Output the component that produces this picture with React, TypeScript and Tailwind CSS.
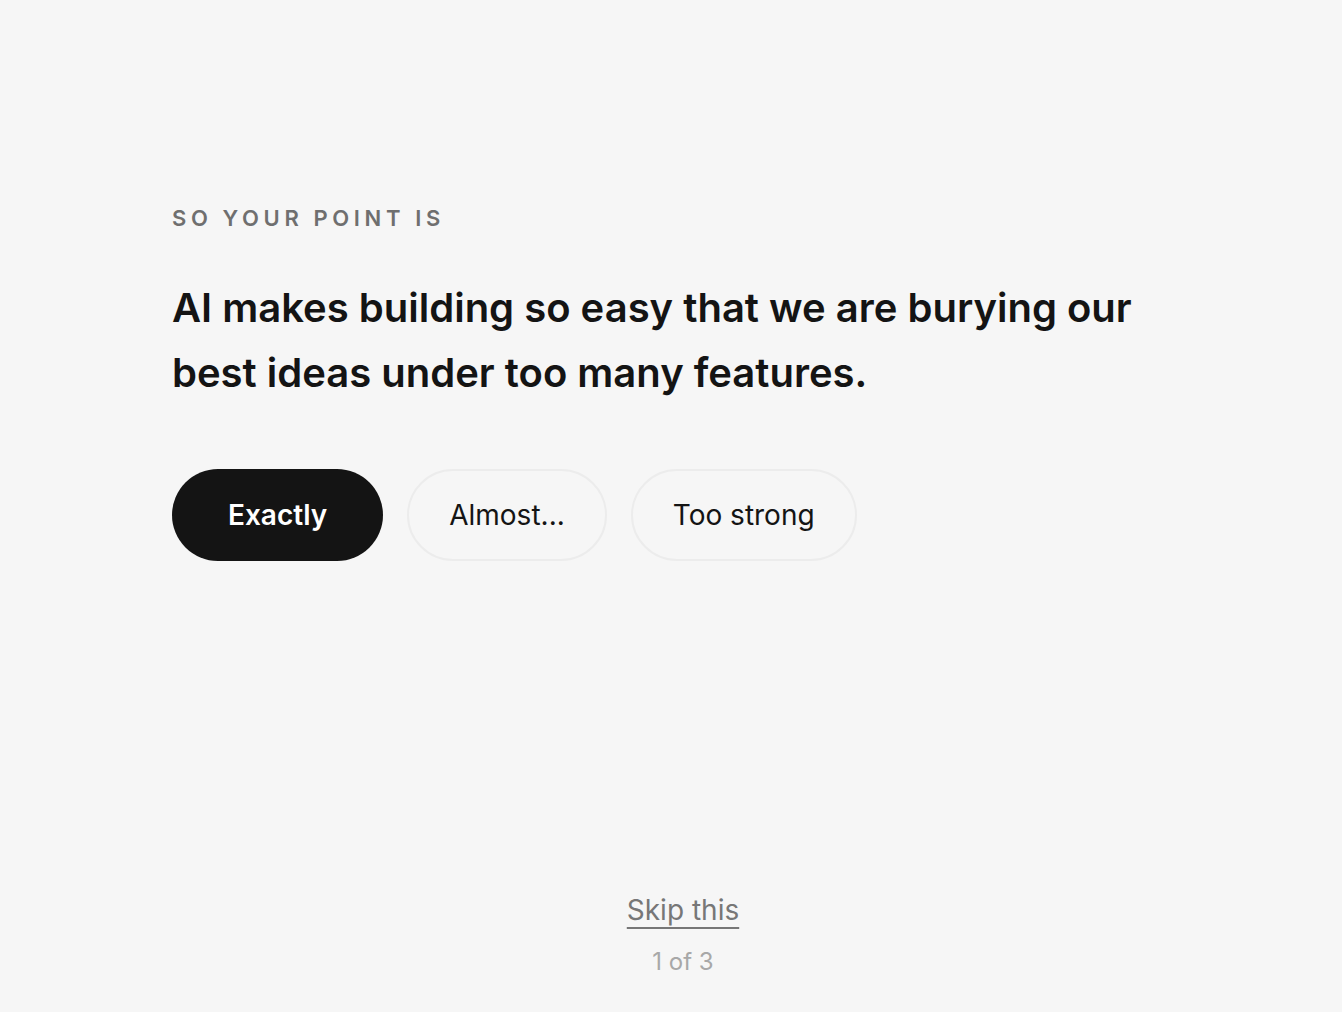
import React from 'react';

export default function App() {
  return (
    <div
      className="min-h-screen bg-[#f6f6f6] flex flex-col pl-[172px] pr-[148px]"
      style={{ fontFamily: 'Inter, "Noto Sans", sans-serif' }}
    >
      <main className="flex-1 pt-[203px]">
        <p className="text-[22px] font-semibold tracking-[0.21em] text-[#6f6f6f] leading-[30px]">
          SO YOUR POINT IS
        </p>
        <h1 className="mt-[42px] text-[40px] font-semibold leading-[65px] text-[#141414]">
          AI makes building so easy that we are burying our
          <br />
          best ideas under too many features.
        </h1>
        <div className="mt-[64px] flex gap-[24px]">
          <button className="h-[92px] rounded-full bg-[#141414] px-[56px] text-[28px] font-semibold text-white">
            Exactly
          </button>
          <button className="h-[92px] rounded-full border-2 border-[#ececec] px-[40px] text-[28px] text-[#141414]">
            Almost...
          </button>
          <button className="h-[92px] rounded-full border-2 border-[#ececec] px-[40px] text-[28px] text-[#141414]">
            Too strong
          </button>
        </div>
      </main>
      <footer className="flex flex-col items-center pb-[34px]">
        <a className="text-[28px] leading-[36px] text-[#777777] underline decoration-2 underline-offset-[7px] cursor-pointer">
          Skip this
        </a>
        <span className="mt-[18px] text-[24px] text-[#a8a8a8] leading-[32px]">1 of 3</span>
      </footer>
    </div>
  );
}
